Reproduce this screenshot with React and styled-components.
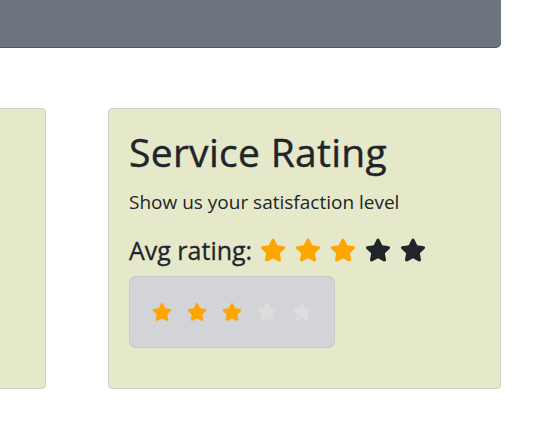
import React from "react";
import styled, { createGlobalStyle } from "styled-components";
import { FaStar } from "react-icons/fa";

const GlobalStyle = createGlobalStyle`
  body {
    margin: 0;
    overflow: hidden;
    background: #fff;
    font-family: "Open Sans", "Noto Sans", sans-serif;
    color: #212529;
  }
`;

const Page = styled.div`
  width: 848px;
  margin-left: -347px;
`;

const TopBar = styled.div`
  height: 60px;
  margin-top: -13px;
  background: #6c757d;
  border-radius: 5px;
  box-shadow: 0 1px 0 #4f565c;
`;

const CardRow = styled.div`
  display: flex;
  gap: 62px;
  margin-top: 61px;
`;

const Card = styled.div`
  box-sizing: border-box;
  width: 393px;
  height: 281px;
  padding: 20px 20px;
  background: #e6e8ca;
  border: 1px solid #d0d1c4;
  border-radius: 4px;
`;

const Title = styled.h1`
  margin: 0 0 12px;
  font-size: 39px;
  font-weight: 400;
  line-height: 1.2;
  letter-spacing: 0.3px;
  -webkit-text-stroke: 0.4px #212529;
`;

const Subtitle = styled.p`
  margin: 0 0 19px;
  font-size: 19px;
  line-height: 1.5;
`;

const AvgLine = styled.div`
  display: flex;
  align-items: center;
  gap: 8px;
  font-size: 25px;
  font-weight: 400;
  line-height: 1.2;
  -webkit-text-stroke: 0.3px #212529;
`;

const Stars = styled.div`
  display: flex;
  align-items: center;
  gap: ${(p) => p.$gap}px;
`;

const Star = styled(FaStar)`
  display: block;
  color: ${(p) => p.$color};
`;

const RatingBox = styled.div`
  box-sizing: border-box;
  width: 206px;
  height: 72px;
  margin-top: 11px;
  padding: 0 22px;
  display: flex;
  align-items: center;
  background: #d3d4d7;
  border: 1px solid #c7c8c6;
  border-radius: 7px;
`;

const avg = 3;
const picked = 3;

export default function App() {
  return (
    <Page>
      <GlobalStyle />
      <TopBar />
      <CardRow>
        <Card />
        <Card>
          <Title>Service Rating</Title>
          <Subtitle>Show us your satisfaction level</Subtitle>
          <AvgLine>
            Avg rating:
            <Stars $gap={9}>
              {[1, 2, 3, 4, 5].map((n) => (
                <Star key={n} size={26} $color={n <= avg ? "#ffa500" : "#212529"} />
              ))}
            </Stars>
          </AvgLine>
          <RatingBox>
            <Stars $gap={15}>
              {[1, 2, 3, 4, 5].map((n) => (
                <Star key={n} size={20} $color={n <= picked ? "#ffa500" : "#dddddd"} />
              ))}
            </Stars>
          </RatingBox>
        </Card>
      </CardRow>
    </Page>
  );
}
